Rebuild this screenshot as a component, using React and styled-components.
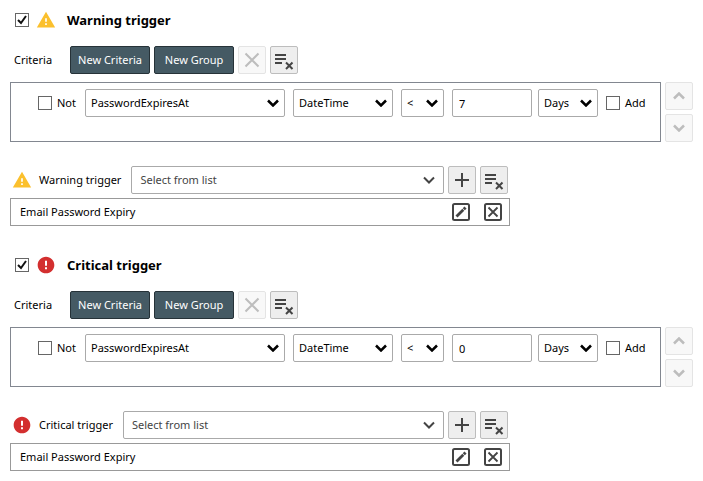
import React, { useState } from "react";
import styled, { createGlobalStyle } from "styled-components";

const triggers = [
  { id: "warning", title: "Warning trigger", value: "7" },
  { id: "critical", title: "Critical trigger", value: "0" }
];

const StatusIcon = ({ type }) =>
  type === "warning" ? (
    <svg width="20" height="20" viewBox="0 0 24 24" fill="#fbc02d" aria-hidden="true">
      <path d="M1 21h22L12 2 1 21zm12-3h-2v-2h2v2zm0-4h-2v-4h2v4z" />
    </svg>
  ) : (
    <svg width="20" height="20" viewBox="0 0 24 24" fill="#d32f2f" aria-hidden="true">
      <path d="M12 2C6.48 2 2 6.48 2 12s4.48 10 10 10 10-4.48 10-10S17.52 2 12 2zm1.2 15h-2.4v-2.2h2.4V17zm0-4h-2.4V7h2.4v6z" />
    </svg>
  );

const ClearListIcon = () => (
  <svg width="26" height="26" viewBox="0 0 26 26" fill="none" stroke="#444" strokeWidth="2" aria-hidden="true">
    <path d="M4 8h11M4 12h11M4 16h7" />
    <path d="M15 15.500l6.500 6.500M21.500 15.500l-6.500 6.500" />
  </svg>
);

const CrossIcon = () => (
  <svg width="26" height="26" viewBox="0 0 26 26" fill="none" stroke="currentColor" strokeWidth="2" aria-hidden="true">
    <path d="M6.500 6.500l13 13M19.500 6.500l-13 13" />
  </svg>
);

const PlusIcon = () => (
  <svg width="26" height="26" viewBox="0 0 26 26" fill="none" stroke="#444" strokeWidth="2" aria-hidden="true">
    <path d="M13 6v14M6 13h14" />
  </svg>
);

const Chevron = ({ up, stroke = 2 }) => (
  <svg width="12" height="8" viewBox="0 0 12 8" fill="none" stroke="currentColor" strokeWidth={stroke} aria-hidden="true">
    <path d={up ? "M1 6.500l5-5 5 5" : "M1 1.500l5 5 5-5"} />
  </svg>
);

const EditIcon = () => (
  <svg width="18" height="18" viewBox="0 0 18 18" fill="none" stroke="#444" aria-hidden="true">
    <rect x="1" y="1" width="16" height="16" rx="1.500" strokeWidth="2" />
    <path d="M4.500 13.500l6.800-6.800" strokeWidth="2.800" />
    <path d="M11.800 6.200l1.700-1.700" strokeWidth="3" />
  </svg>
);

const DeleteIcon = () => (
  <svg width="18" height="18" viewBox="0 0 18 18" fill="none" stroke="#444" aria-hidden="true">
    <rect x="1" y="1" width="16" height="16" rx="1.500" strokeWidth="2" />
    <path d="M4.500 4.500l9 9M13.500 4.500l-9 9" strokeWidth="1.800" />
  </svg>
);

const Check = ({ label, children, ...rest }) => (
  <CheckLabel>
    <CheckBox>
      <input type="checkbox" aria-label={label} {...rest} />
      <svg viewBox="0 0 14 14" fill="none" stroke="#111" strokeWidth="2" aria-hidden="true">
        <path d="M3 7l3 3 5-7" />
      </svg>
    </CheckBox>
    {children}
  </CheckLabel>
);

const Dropdown = ({ label, options, width, id }) => (
  <SelectWrapper $width={width}>
    <select id={id} aria-label={label}>
      {options.map(option => (
        <option key={option}>{option}</option>
      ))}
    </select>
    <Chevron stroke={width ? 2.5 : 2} />
  </SelectWrapper>
);

const Trigger = ({ id, title, value }) => {
  const [enabled, setEnabled] = useState(true);

  return (
    <Section>
      <Header>
        <Check
          label={`Enable ${title}`}
          checked={enabled}
          onChange={e => setEnabled(e.target.checked)}
        />
        <StatusIcon type={id} />
        <h2>{title}</h2>
      </Header>

      <Toolbar>
        <span>Criteria</span>
        <DarkButton type="button">New Criteria</DarkButton>
        <DarkButton type="button">New Group</DarkButton>
        <IconButton type="button" aria-label="Remove" disabled>
          <CrossIcon />
        </IconButton>
        <IconButton type="button" aria-label="Clear criteria">
          <ClearListIcon />
        </IconButton>
      </Toolbar>

      <Criteria>
        <CriteriaBox>
          <Check>Not</Check>
          <Dropdown label="Property" options={["PasswordExpiresAt"]} width="200px" />
          <Dropdown label="Type" options={["DateTime"]} width="100px" />
          <Dropdown label="Operator" options={["<", ">", "="]} width="43px" />
          <ValueGroup>
            <ValueInput aria-label="Value" defaultValue={value} />
            <Dropdown label="Unit" options={["Days"]} width="60px" />
          </ValueGroup>
          <Check>Add</Check>
        </CriteriaBox>
        <Order>
          <IconButton type="button" aria-label="Move up" disabled>
            <Chevron up stroke={2.5} />
          </IconButton>
          <IconButton type="button" aria-label="Move down" disabled>
            <Chevron stroke={2.5} />
          </IconButton>
        </Order>
      </Criteria>

      <Actions>
        <Picker>
          <StatusIcon type={id} />
          <label htmlFor={`${id}-action`}>{title}</label>
          <Dropdown id={`${id}-action`} options={["Select from list"]} />
          <IconButton type="button" aria-label="Add">
            <PlusIcon />
          </IconButton>
          <IconButton type="button" aria-label="Clear list">
            <ClearListIcon />
          </IconButton>
        </Picker>
        <Item>
          <span>Email Password Expiry</span>
          <PlainButton type="button" aria-label="Edit">
            <EditIcon />
          </PlainButton>
          <PlainButton type="button" aria-label="Delete">
            <DeleteIcon />
          </PlainButton>
        </Item>
      </Actions>
    </Section>
  );
};

const App = () => (
  <React.Fragment>
    <GlobalStyle />
    <Page>
      {triggers.map(trigger => (
        <Trigger key={trigger.id} {...trigger} />
      ))}
    </Page>
  </React.Fragment>
);

const GlobalStyle = createGlobalStyle`
  * {
    box-sizing: border-box;
  }
  body {
    margin: 0;
    background: white;
    color: #000;
  }
  body, button, input, select {
    font-family: "Noto Sans", "Open Sans", sans-serif;
    font-size: 11px;
    line-height: 16px;
  }
  svg {
    display: block;
    flex-shrink: 0;
  }
`;

const Page = styled.main`
  display: flex;
  flex-direction: column;
  gap: 25px;
  padding: 6px 10px 0;
`;

const Section = styled.section`
  display: flex;
  flex-direction: column;
`;

const Header = styled.header`
  display: flex;
  align-items: center;
  height: 28px;
  padding-left: 5px;
  gap: 7px;
  h2 {
    margin: 0 0 0 4px;
    font-size: 13px;
    line-height: 20px;
    font-weight: 700;
  }
`;

const Toolbar = styled.div`
  display: flex;
  align-items: center;
  gap: 4px;
  margin-top: 12px;
  span {
    width: 56px;
    padding-left: 4px;
  }
`;

const DarkButton = styled.button`
  width: 80px;
  height: 28px;
  padding: 0;
  color: white;
  background: #455a64;
  border: 1px solid #263238;
  border-radius: 2px;
  white-space: nowrap;
`;

const IconButton = styled.button`
  display: flex;
  align-items: center;
  justify-content: center;
  flex-shrink: 0;
  width: 28px;
  height: 28px;
  padding: 0;
  color: #444;
  background: #eee;
  border: 1px solid #bdbdbd;
  border-radius: 2px;
  &:disabled {
    color: #bdbdbd;
    background: #f8f8f8;
    border-color: #e4e4e4;
  }
`;

const PlainButton = styled.button`
  display: flex;
  padding: 0;
  background: none;
  border: none;
`;

const Criteria = styled.div`
  display: flex;
  gap: 4px;
  margin-top: 8px;
`;

const CriteriaBox = styled.div`
  display: flex;
  flex: 1;
  align-items: flex-start;
  gap: 8px;
  padding: 6px 6px 6px 27px;
  border: 1px solid #828790;
  label {
    min-width: 39px;
  }
`;

const ValueGroup = styled.div`
  display: flex;
  gap: 6px;
`;

const Order = styled.div`
  display: flex;
  flex-direction: column;
  gap: 4px;
`;

const CheckLabel = styled.label`
  display: flex;
  align-items: center;
  gap: 5px;
  height: 28px;
`;

const CheckBox = styled.span`
  position: relative;
  width: 14px;
  height: 14px;
  input {
    display: block;
    appearance: none;
    width: 14px;
    height: 14px;
    margin: 0;
    background: white;
    border: 1px solid #666;
  }
  svg {
    display: none;
    position: absolute;
    inset: 0;
    pointer-events: none;
  }
  input:checked + svg {
    display: block;
  }
`;

const SelectWrapper = styled.span`
  display: flex;
  position: relative;
  flex: ${({ $width }) => ($width ? `0 0 ${$width}` : "1")};
  color: ${({ $width }) => ($width ? "#000" : "#444")};
  select {
    appearance: none;
    width: 100%;
    height: 28px;
    padding: 0 ${({ $width }) => ($width ? "20px 0 5px" : "28px 0 8px")};
    color: inherit;
    background: white;
    border: 1px solid #aaa;
    border-radius: 2px;
  }
  svg {
    position: absolute;
    top: 10px;
    right: ${({ $width }) => ($width ? "6px" : "9px")};
    pointer-events: none;
  }
`;

const ValueInput = styled.input`
  width: 80px;
  height: 28px;
  padding: 0 6px;
  border: 1px solid #aaa;
  border-radius: 2px;
`;

const Actions = styled.div`
  display: flex;
  flex-direction: column;
  gap: 4px;
  max-width: 500px;
  margin-top: 24px;
`;

const Picker = styled.div`
  display: flex;
  align-items: center;
  gap: 4px;
  padding: 0 2px;
  label {
    padding: 0 6px 0 3px;
  }
`;

const Item = styled.div`
  display: flex;
  align-items: center;
  gap: 14px;
  height: 28px;
  padding: 0 7px 0 9px;
  border: 1px solid #999;
  span {
    flex: 1;
  }
`;

export default App;
